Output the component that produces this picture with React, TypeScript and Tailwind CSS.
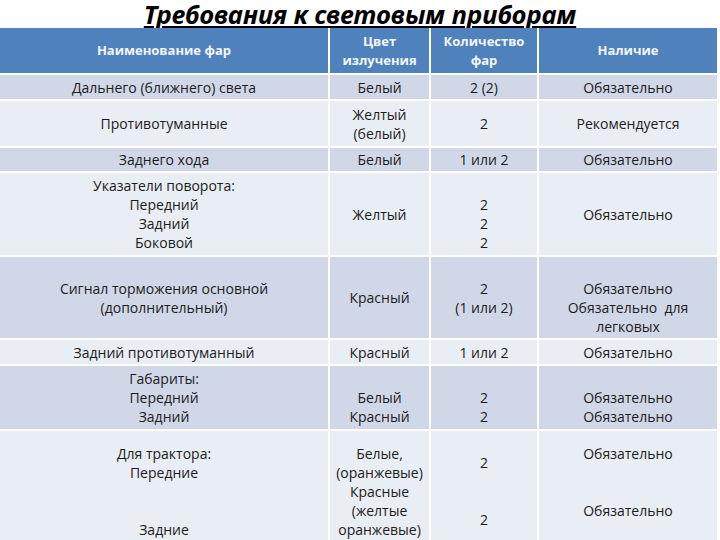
import React from "react";

type Row = { h: number; dark: boolean; cells: string[][] };

const rows: Row[] = [
  { h: 24, dark: true, cells: [["Дальнего (ближнего) света"], ["Белый"], ["2 (2)"], ["Обязательно"]] },
  { h: 45, dark: false, cells: [["Противотуманные"], ["Желтый", "(белый)"], ["2"], ["Рекомендуется"]] },
  { h: 23, dark: true, cells: [["Заднего хода"], ["Белый"], ["1 или 2"], ["Обязательно"]] },
  {
    h: 82,
    dark: false,
    cells: [
      ["Указатели поворота:", "Передний", "Задний", "Боковой"],
      ["Желтый"],
      ["", "2", "2", "2"],
      ["Обязательно"],
    ],
  },
  {
    h: 81,
    dark: true,
    cells: [
      ["Сигнал торможения основной", "(дополнительный)"],
      ["Красный"],
      ["2", "(1 или 2)"],
      ["", "Обязательно", "Обязательно  для", "легковых"],
    ],
  },
  { h: 24, dark: false, cells: [["Задний противотуманный"], ["Красный"], ["1 или 2"], ["Обязательно"]] },
  {
    h: 63,
    dark: true,
    cells: [
      ["Габариты:", "Передний", "Задний"],
      ["", "Белый", "Красный"],
      ["", "2", "2"],
      ["", "Обязательно", "Обязательно"],
    ],
  },
  {
    h: 120,
    dark: false,
    cells: [
      ["Для трактора:", "Передние", "", "", "Задние"],
      ["Белые,", "(оранжевые)", "Красные", "(желтые", "оранжевые)"],
      ["2", "", "", "2"],
      ["Обязательно", "", "", "Обязательно", ""],
    ],
  },
];

const widths = ["w-[328px]", "w-[99px]", "w-[106px]", "w-[178px]"];

function Lines({ lines }: { lines: string[] }) {
  return (
    <>
      {lines.map((l, i) => (
        <div key={i} className="h-[19px] leading-[19px] whitespace-pre">
          {l === "" ? "\u00a0" : l}
        </div>
      ))}
    </>
  );
}

export default function App() {
  return (
    <div
      className="w-[720px] h-[540px] overflow-hidden bg-white text-[#1c1c1c]"
      style={{ fontFamily: '"Open Sans", "Noto Sans", sans-serif' }}
    >
      <div className="h-[28px] flex justify-center items-start pt-[1px]">
        <h1
          className="text-[25.5px] leading-[27px] font-bold italic underline decoration-2 underline-offset-[2px] text-black"
          style={{ fontFamily: '"Noto Sans", "Open Sans", sans-serif' }}
        >
          Требования к световым приборам
        </h1>
      </div>
      <div className="w-[717px] flex flex-col gap-[2px]">
        <div className="flex gap-[2px] h-[45px] text-[13px] font-bold text-[#f3f6fb]">
          <div className={`${widths[0]} bg-[#4f81bd] flex items-center justify-center`}>Наименование фар</div>
          <div className={`${widths[1]} bg-[#4f81bd] flex flex-col items-center justify-center leading-[19px]`}>
            <div>Цвет</div>
            <div>излучения</div>
          </div>
          <div className={`${widths[2]} bg-[#4f81bd] flex flex-col items-center justify-center leading-[19px]`}>
            <div>Количество</div>
            <div>фар</div>
          </div>
          <div className={`${widths[3]} bg-[#4f81bd] flex items-center justify-center`}>Наличие</div>
        </div>
        {rows.map((r, ri) => (
          <div key={ri} className="flex gap-[2px] text-[14px] shrink-0" style={{ height: r.h }}>
            {r.cells.map((c, ci) => (
              <div
                key={ci}
                className={`${widths[ci]} ${r.dark ? "bg-[#d0d8e8]" : "bg-[#e9edf4]"} flex flex-col items-center justify-center text-center`}
              >
                <Lines lines={c} />
              </div>
            ))}
          </div>
        ))}
      </div>
    </div>
  );
}
